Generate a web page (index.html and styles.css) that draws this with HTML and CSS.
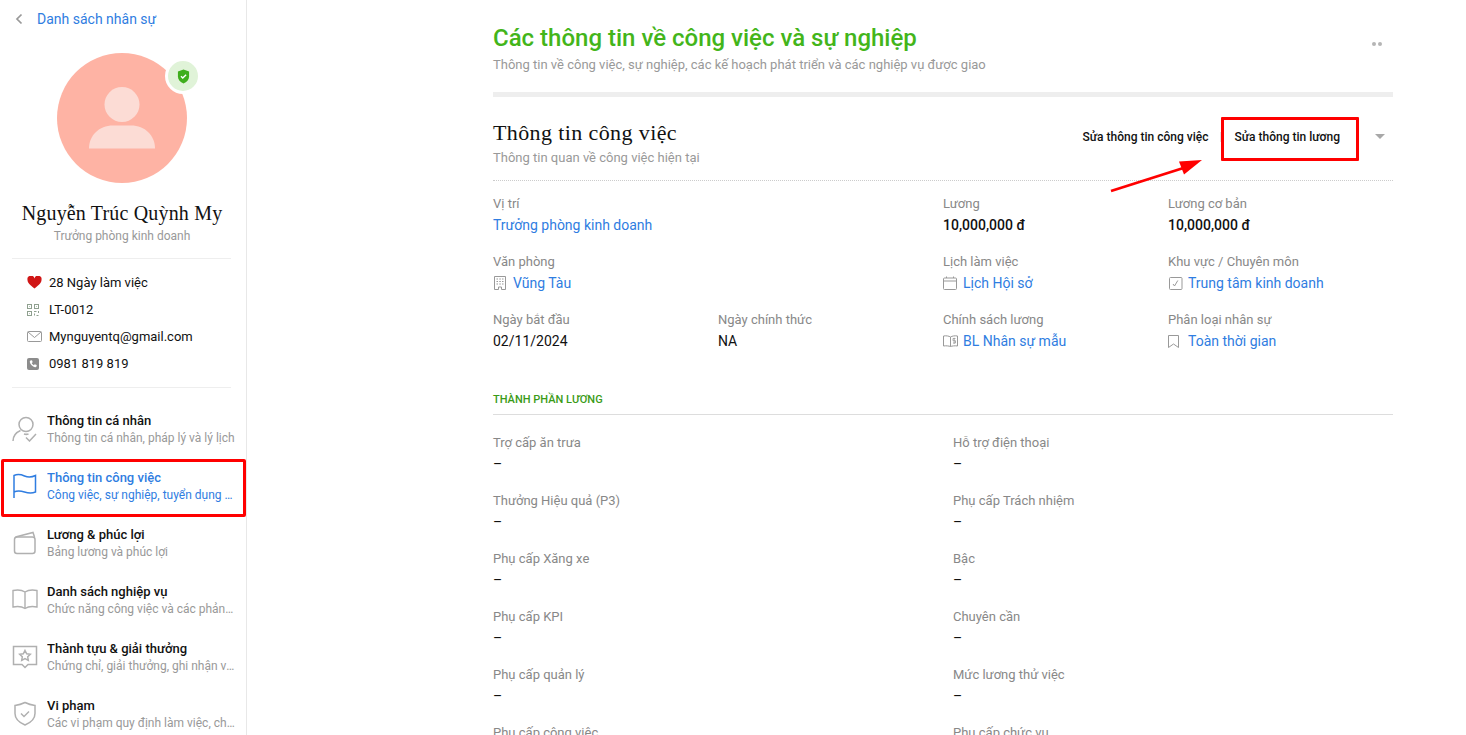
FILE: index.html
```html
<!DOCTYPE html>
<html lang="vi">
<head>
<meta charset="utf-8">
<title>Thông tin công việc</title>
<link rel="stylesheet" href="styles.css">
</head>
<body>
<div class="page">
  <aside class="sidebar">
    <a class="back">
      <svg class="back-icon" width="8" height="12" viewBox="0 0 8 12"><path d="M6.5 1.500 2 6l4.500 4.500" fill="none" stroke="#999" stroke-width="1.700"/></svg>
      <span>Danh sách nhân sự</span>
    </a>
    <div class="avatar-wrap">
      <div class="avatar">
        <svg width="130" height="130" viewBox="0 0 130 130"><circle cx="65" cy="51.500" r="17.500" fill="#fcdcd5"/><path d="M32 95.500c0-13 10-23 24-23h18c14 0 24 10 24 23z" fill="#fcdcd5"/></svg>
      </div>
      <div class="badge">
        <svg width="13" height="15" viewBox="0 0 14 16"><path d="M7 .5 13 2.500V8c0 3.500-2.500 6-6 7.500C3.500 14 1 11.500 1 8V2.500z" fill="#3fae1c"/><path d="M4.300 7.800 6.200 9.700 9.800 6.200" fill="none" stroke="#fff" stroke-width="1.500"/></svg>
      </div>
    </div>
    <div class="name">Nguyễn Trúc Quỳnh My</div>
    <div class="role">Trưởng phòng kinh doanh</div>
    <ul class="contact">
      <li><svg class="c-icon" width="15" height="13" viewBox="0 0 15 13"><path d="M7.500 12.500C3 9 .5 6.800.5 4A3.500 3.500 0 0 1 7.500 2.500 3.500 3.500 0 0 1 14.500 4c0 2.800-2.500 5-7 8.500z" fill="#d01616"/></svg><span>28 Ngày làm việc</span></li>
      <li><svg class="c-icon" width="12" height="12" viewBox="0 0 12 12" fill="none" stroke="#8fa08f"><rect x=".5" y=".5" width="4" height="4"/><rect x="7.500" y=".5" width="4" height="4"/><rect x=".5" y="7.500" width="4" height="4"/><path d="M2.500 2.200v.6M9.500 2.200v.6M2.500 9.200v.6M7 7.500h2.500M11.500 7v2M7.500 9.500v2M9.500 11.500h2"/></svg><span>LT-0012</span></li>
      <li><svg class="c-icon" width="15" height="11" viewBox="0 0 15 11" fill="none" stroke="#999"><rect x=".5" y=".5" width="14" height="10" rx="1"/><path d="m1 1 6.500 5.500L14 1"/></svg><span>Mynguyentq@gmail.com</span></li>
      <li><svg class="c-icon" width="12" height="12" viewBox="0 0 12 12"><rect width="12" height="12" rx="2" fill="#8c8c8c"/><path d="M3.500 2.500 5 2.300l.7 2-1 .8c.4 1 1.200 1.800 2.200 2.200l.8-1 2 .7-.2 1.500c-.2.500-.8.800-1.500.7C5.600 8.800 3.200 6.400 2.800 4c-.1-.7.200-1.300.7-1.500z" fill="#fff"/></svg><span>0981 819 819</span></li>
    </ul>
    <nav class="menu">
      <a class="menu-item">
        <svg class="m-icon" width="26" height="26" viewBox="0 0 26 26" fill="none" stroke="#b0b0b0" stroke-width="1.500"><circle cx="14" cy="8.500" r="7"/><path d="M1 25c0-5 3-8.500 7.500-10.500"/><path d="M12 18c1.500.5 3 .5 4.500 0"/><path d="m14 21.500 3.500 3.500 6.500-7"/></svg>
        <div class="m-text"><div class="m-title">Thông tin cá nhân</div><div class="m-sub">Thông tin cá nhân, pháp lý và lý lịch</div></div>
      </a>
      <a class="menu-item active">
        <svg class="m-icon" width="26" height="26" viewBox="0 0 26 26" fill="none" stroke="#2f7de1" stroke-width="1.500"><path d="M2 25V2.500c3.500-1.500 7-1 10.500.5S19.500 4.500 23.500 2.500V19c-4 1.500-7.500 1-11 0S5.500 17.500 2 19"/></svg>
        <div class="m-text"><div class="m-title">Thông tin công việc</div><div class="m-sub">Công việc, sự nghiệp, tuyển dụng và đào tạo</div></div>
      </a>
      <a class="menu-item">
        <svg class="m-icon" width="26" height="26" viewBox="0 0 26 26" fill="none" stroke="#b0b0b0" stroke-width="1.500"><rect x="2.500" y="7" width="20.500" height="16.500" rx="2.500"/><path d="M3.500 7 21 2.500 22.500 7"/></svg>
        <div class="m-text"><div class="m-title">Lương &amp; phúc lợi</div><div class="m-sub">Bảng lương và phúc lợi</div></div>
      </a>
      <a class="menu-item">
        <svg class="m-icon" width="26" height="26" viewBox="0 0 26 26" fill="none" stroke="#b0b0b0" stroke-width="1.400"><path d="M13 5C10 3 6 2.500 1 3.500v16.500c5-1 9-.5 12 1.500 3-2 7-2.500 12-1.500V3.500C20 2.500 16 3 13 5zM13 5v16.500"/></svg>
        <div class="m-text"><div class="m-title">Danh sách nghiệp vụ</div><div class="m-sub">Chức năng công việc và các phản hồi</div></div>
      </a>
      <a class="menu-item">
        <svg class="m-icon" width="26" height="26" viewBox="0 0 26 26" fill="none" stroke="#b0b0b0" stroke-width="1.500"><path d="M1.500 2.500h23v18H16l-3 3-3-3H1.500z"/><path d="m13 6.500 1.700 3.300 3.600.5-2.600 2.500.6 3.600-3.300-1.700-3.300 1.700.6-3.600-2.600-2.500 3.600-.5z"/></svg>
        <div class="m-text"><div class="m-title">Thành tựu &amp; giải thưởng</div><div class="m-sub">Chứng chỉ, giải thưởng, ghi nhận và khen thưởng</div></div>
      </a>
      <a class="menu-item">
        <svg class="m-icon" width="26" height="26" viewBox="0 0 26 26" fill="none" stroke="#b0b0b0" stroke-width="1.500"><path d="M13 1.500c3 1.500 6 2.500 10 3v8c0 5-4 9-10 11.500C7 21.500 3 17.500 3 12.500v-8c4-.5 7-1.500 10-3z"/><path d="m9 12.500 3 3 5-5"/></svg>
        <div class="m-text"><div class="m-title">Vi phạm</div><div class="m-sub">Các vi phạm quy định làm việc, chính sách</div></div>
      </a>
    </nav>
    <div class="mark-menu"></div>
  </aside>

  <main class="main">
    <header class="head">
      <div>
        <h1>Các thông tin về công việc và sự nghiệp</h1>
        <p class="head-sub">Thông tin về công việc, sự nghiệp, các kế hoạch phát triển và các nghiệp vụ được giao</p>
      </div>
      <div class="dots"><i></i><i></i></div>
    </header>

    <section class="job">
      <div class="job-head">
        <div>
          <h2>Thông tin công việc</h2>
          <p class="job-sub">Thông tin quan về công việc hiện tại</p>
        </div>
        <div class="actions">
          <a>Sửa thông tin công việc</a>
          <span class="sep"></span>
          <a>Sửa thông tin lương</a>
          <span class="caret"></span>
        </div>
      </div>
      <div class="facts">
        <div class="fact wide"><label>Vị trí</label><div class="val link">Trưởng phòng kinh doanh</div></div>
        <div class="fact"><label>Lương</label><div class="val strong">10,000,000 đ</div></div>
        <div class="fact"><label>Lương cơ bản</label><div class="val strong">10,000,000 đ</div></div>

        <div class="fact wide"><label>Văn phòng</label><div class="val link">
          <svg class="v-icon" width="14" height="14" viewBox="0 0 14 14" fill="none" stroke="#999"><path d="M1.500 13.500V.5h11v13H8.500v-2.500h-3v2.500z"/><path d="M3.500 3h1.500M6.300 3h1.500M9 3h1.500M3.500 5.500h1.500M6.300 5.500h1.500M9 5.500h1.500M3.500 8h1.500M6.300 8h1.500M9 8h1.500" stroke-width="1.200"/></svg>Vũng Tàu</div></div>
        <div class="fact"><label>Lịch làm việc</label><div class="val link">
          <svg class="v-icon" width="14" height="14" viewBox="0 0 14 14" fill="none" stroke="#999"><rect x=".5" y="2" width="13" height="11.500" rx="1"/><path d="M.5 5h13M3.500.5V2M10.500.5V2"/></svg>Lịch Hội sở</div></div>
        <div class="fact"><label>Khu vực / Chuyên môn</label><div class="val link">
          <svg class="v-icon v-wide" width="14" height="13" viewBox="0 0 14 13" fill="none" stroke="#999"><rect x=".5" y=".5" width="12.500" height="12" rx="1"/><path d="m4 7 1.500 2L8.800 3.500"/></svg>Trung tâm kinh doanh</div></div>

        <div class="fact"><label>Ngày bắt đầu</label><div class="val">02/11/2024</div></div>
        <div class="fact"><label>Ngày chính thức</label><div class="val">NA</div></div>
        <div class="fact"><label>Chính sách lương</label><div class="val link">
          <svg class="v-icon v-book" width="15" height="12" viewBox="0 0 15 12" fill="none" stroke="#999"><path d="M7.500 2C6 1 3 .5.500 1v10c2.500-.5 5.500 0 7 .5 1.500-.5 4.500-1 7-.5V1c-2.500-.5-5.500 0-7 1zM7.500 2v9.500"/><path d="M12.500 3.500H10v2.200h2.500V8H10M11.200 2.800v6" stroke-width=".8"/></svg>BL Nhân sự mẫu</div></div>
        <div class="fact"><label>Phân loại nhân sự</label><div class="val link">
          <svg class="v-icon" width="11" height="13" viewBox="0 0 11 13" fill="none" stroke="#999"><path d="M.5.5h10v12L5.500 9 .5 12.500z"/></svg><span class="after-mark">Toàn thời gian</span></div></div>
      </div>
    </section>

    <section class="salary">
      <h3>THÀNH PHẦN LƯƠNG</h3>
      <div class="salary-grid">
        <div class="s-item"><label>Trợ cấp ăn trưa</label><div class="val">–</div></div>
        <div class="s-item"><label>Hỗ trợ điện thoại</label><div class="val">–</div></div>
        <div class="s-item"><label>Thưởng Hiệu quả (P3)</label><div class="val">–</div></div>
        <div class="s-item"><label>Phụ cấp Trách nhiệm</label><div class="val">–</div></div>
        <div class="s-item"><label>Phụ cấp Xăng xe</label><div class="val">–</div></div>
        <div class="s-item"><label>Bậc</label><div class="val">–</div></div>
        <div class="s-item"><label>Phụ cấp KPI</label><div class="val">–</div></div>
        <div class="s-item"><label>Chuyên cần</label><div class="val">–</div></div>
        <div class="s-item"><label>Phụ cấp quản lý</label><div class="val">–</div></div>
        <div class="s-item"><label>Mức lương thử việc</label><div class="val">–</div></div>
        <div class="s-item"><label>Phụ cấp công việc</label><div class="val">–</div></div>
        <div class="s-item"><label>Phụ cấp chức vụ</label><div class="val">–</div></div>
      </div>
    </section>
  </main>

  <div class="mark-box"></div>
  <svg class="mark-arrow" width="100" height="40" viewBox="0 0 100 40"><path d="M1 32 75 8.500" stroke="#f00" stroke-width="2.800" fill="none"/><path d="M92 1 69 2.500l5 13z" fill="#f00"/></svg>
</div>
</body>
</html>
```
FILE: styles.css
```css
* { box-sizing: border-box; }
html, body { margin: 0; padding: 0; height: 100%; overflow: hidden; background: #fff; }
body { font-family: Roboto, "Noto Sans", sans-serif; font-size: 14px; color: #111; }
h1, h2, h3, p, ul { margin: 0; padding: 0; }
.page { position: relative; display: flex; width: 1466px; height: 735px; overflow: hidden; }

.sidebar { position: relative; width: 247px; height: 735px; flex: none; border-right: 1px solid #e8e8e8; overflow: hidden; }
.back { display: flex; align-items: center; height: 18px; margin-top: 10px; padding-left: 15px; color: #2f7de1; font-size: 14px; }
.back-icon { margin-right: 14px; }
.avatar-wrap { position: relative; width: 130px; height: 130px; margin: 25px 0 0 57px; }
.avatar { width: 130px; height: 130px; border-radius: 50%; background: #feb3a4; }
.avatar svg { display: block; }
.badge { position: absolute; left: 108px; top: 5px; width: 36px; height: 36px; border: 3px solid #fff; border-radius: 50%; background: #e0f3d8; display: flex; align-items: center; justify-content: center; }
.name { margin-top: 19px; padding-right: 2px; text-align: center; font-family: "Liberation Serif", serif; font-size: 20px; line-height: 22px; letter-spacing: .17px; color: #111; }
.role { margin-top: 4px; padding-right: 2px; text-align: center; font-size: 12px; line-height: 16px; color: #999; }
.contact { list-style: none; margin: 14px 15px 0 12px; padding: 10px 0 10px; border-top: 1px solid #eee; border-bottom: 1px solid #eee; }
.contact li { display: flex; align-items: center; height: 27px; font-size: 13px; color: #111; padding-left: 15px; }
.c-icon { flex: none; }
.contact li span { position: absolute; left: 49px; }
.menu { margin-top: 12px; }
.menu-item { display: flex; align-items: center; height: 57px; padding: 0 0 0 12px; }
.m-icon { flex: none; margin-right: 9px; }
.m-text { min-width: 0; flex: 1; padding: 1px 10px 0 0; }
.m-title { font-size: 13px; line-height: 17px; font-weight: 500; color: #111; white-space: nowrap; overflow: hidden; text-overflow: ellipsis; }
.m-sub { margin-top: 1px; font-size: 12px; line-height: 17px; color: #999; white-space: nowrap; overflow: hidden; text-overflow: ellipsis; }
.menu-item.active .m-title, .menu-item.active .m-sub { color: #2f7de1; }
.mark-menu { position: absolute; left: 1px; top: 459px; width: 245px; height: 58px; border: 3px solid #f00; border-radius: 2px; }

.main { width: 900px; margin-left: 246px; flex: none; }
.head { display: flex; justify-content: space-between; height: 97px; padding-top: 24px; border-bottom: 5px solid #eee; }
h1 { font-size: 24px; line-height: 28px; font-weight: 500; color: #43b51a; }
.head-sub { margin-top: 4px; font-size: 13px; line-height: 18px; color: #999; }
.dots { display: flex; gap: 2px; margin: 18px 11px 0 0; }
.dots i { display: block; width: 4px; height: 4px; border-radius: 50%; background: #b5b5b5; }

.job-head { display: flex; justify-content: space-between; height: 84px; padding-top: 24px; border-bottom: 1px dotted #ccc; }
h2 { font-family: "Liberation Serif", serif; font-size: 22px; line-height: 24px; font-weight: 400; letter-spacing: .39px; color: #111; }
.job-sub { margin-top: 4px; font-size: 13px; line-height: 18px; color: #999; }
.actions { display: flex; align-items: flex-start; padding-top: 8px; font-size: 12px; line-height: 16px; font-weight: 500; color: #111; }
.sep { width: 2px; height: 10px; margin: 3px 12px 0 12px; background: #e4e4e4; }
.caret { width: 0; height: 0; margin: 5px 8px 0 35px; border: 5px solid transparent; border-top: 5px solid #a8a8a8; }

.facts { display: grid; grid-template-columns: repeat(4, 225px); grid-auto-rows: 58px; padding-top: 14px; }
.fact.wide { grid-column: span 2; }
label { display: block; font-size: 13px; line-height: 18px; color: #888; }
.val { display: flex; align-items: center; margin-top: 3px; font-size: 14px; line-height: 18px; color: #111; }
.val.link { color: #2f7de1; }
.val.strong { font-weight: 500; }
.v-icon { flex: none; margin-right: 6px; }
.v-wide { margin-right: 5px; margin-left: 1px; }
.v-book { margin-right: 5px; }
.after-mark { margin-left: 3px; }

.salary { margin-top: 20px; }
h3 { height: 21px; padding-top: 4px; font-size: 11px; line-height: 14px; font-weight: 500; color: #3b9b17; border-bottom: 1px solid #ddd; box-sizing: content-box; }
.salary-grid { display: grid; grid-template-columns: 460px 440px; grid-auto-rows: 58px; padding-top: 19px; }

.mark-box { position: absolute; left: 1221px; top: 117px; width: 138px; height: 44px; border: 3px solid #f00; border-radius: 1px; }
.mark-arrow { position: absolute; left: 1110px; top: 159px; }
```
